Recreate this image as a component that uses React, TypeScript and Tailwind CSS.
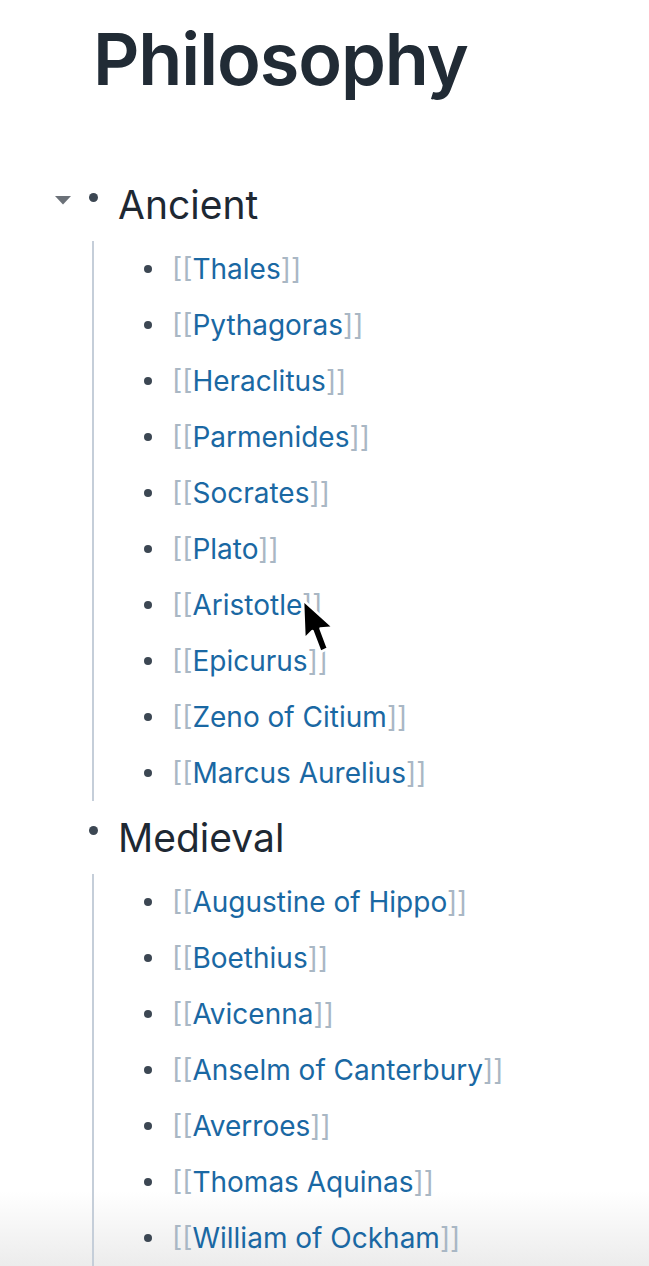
import React from "react";

const ancient = [
  "Thales",
  "Pythagoras",
  "Heraclitus",
  "Parmenides",
  "Socrates",
  "Plato",
  "Aristotle",
  "Epicurus",
  "Zeno of Citium",
  "Marcus Aurelius",
];

const medieval = [
  "Augustine of Hippo",
  "Boethius",
  "Avicenna",
  "Anselm of Canterbury",
  "Averroes",
  "Thomas Aquinas",
  "William of Ockham",
];

function Child({ name }: { name: string }) {
  return (
    <div className="flex h-[56px] items-center pl-[50px]">
      <span className="block h-[8px] w-[8px] rounded-full bg-[#3c4753]" />
      <span className="ml-[20px] text-[28px] leading-none">
        <span className="text-[#a9b7c4]">[[</span>
        <span className="text-[#1a68a3]">{name}</span>
        <span className="text-[#a9b7c4]">]]</span>
      </span>
    </div>
  );
}

function Group({ title, items, arrow }: { title: string; items: string[]; arrow?: boolean }) {
  return (
    <div>
      <div className="flex h-[73px] items-center">
        <div className="flex w-[34px] justify-center self-start pt-[27px]">
          {arrow && (
            <svg width="18" height="10" viewBox="0 0 18 10">
              <path d="M1 1 L17 1 L9 9.5 Z" fill="#6b7178" />
            </svg>
          )}
        </div>
        <div className="ml-[9px] flex w-[9px] justify-center self-start pt-[25px]">
          <span className="block h-[9px] w-[9px] rounded-full bg-[#3c4753]" />
        </div>
        <span className="ml-[20px] text-[39px] leading-none text-[#1e2833]">
          {title}
        </span>
      </div>
      <div className="ml-[46px] border-l-2 border-[#c5ced9]">
        {items.map((n) => (
          <Child key={n} name={n} />
        ))}
      </div>
    </div>
  );
}

export default function App() {
  return (
    <div
      className="relative h-[1266px] w-[649px] overflow-hidden bg-white"
      style={{ fontFamily: "Inter, 'Noto Sans', sans-serif" }}
    >
      <div className="pointer-events-none absolute bottom-0 left-0 h-[75px] w-full bg-gradient-to-b from-[#ffffff] to-[#ececec]" />
      <div className="relative">
        <h1 className="pl-[93px] pt-[16px] text-[72px] font-semibold leading-[1.2] tracking-[-0.015em] text-[#212b35]">
          Philosophy
        </h1>
        <div className="mt-[66px] pl-[46px]">
          <Group title="Ancient" items={ancient} arrow />
          <Group title="Medieval" items={medieval} />
        </div>
      </div>
      <svg
        className="absolute left-[300px] top-[597px]"
        width="40"
        height="60"
        viewBox="0 0 40 60"
      >
        <path
          d="M3 3 L4.5 42 L12.5 34 L20.5 55 L28 51.5 L20.5 31.5 L33.5 30.5 Z"
          fill="#000"
          stroke="#fff"
          strokeWidth="2.5"
          strokeLinejoin="round"
        />
      </svg>
    </div>
  );
}
